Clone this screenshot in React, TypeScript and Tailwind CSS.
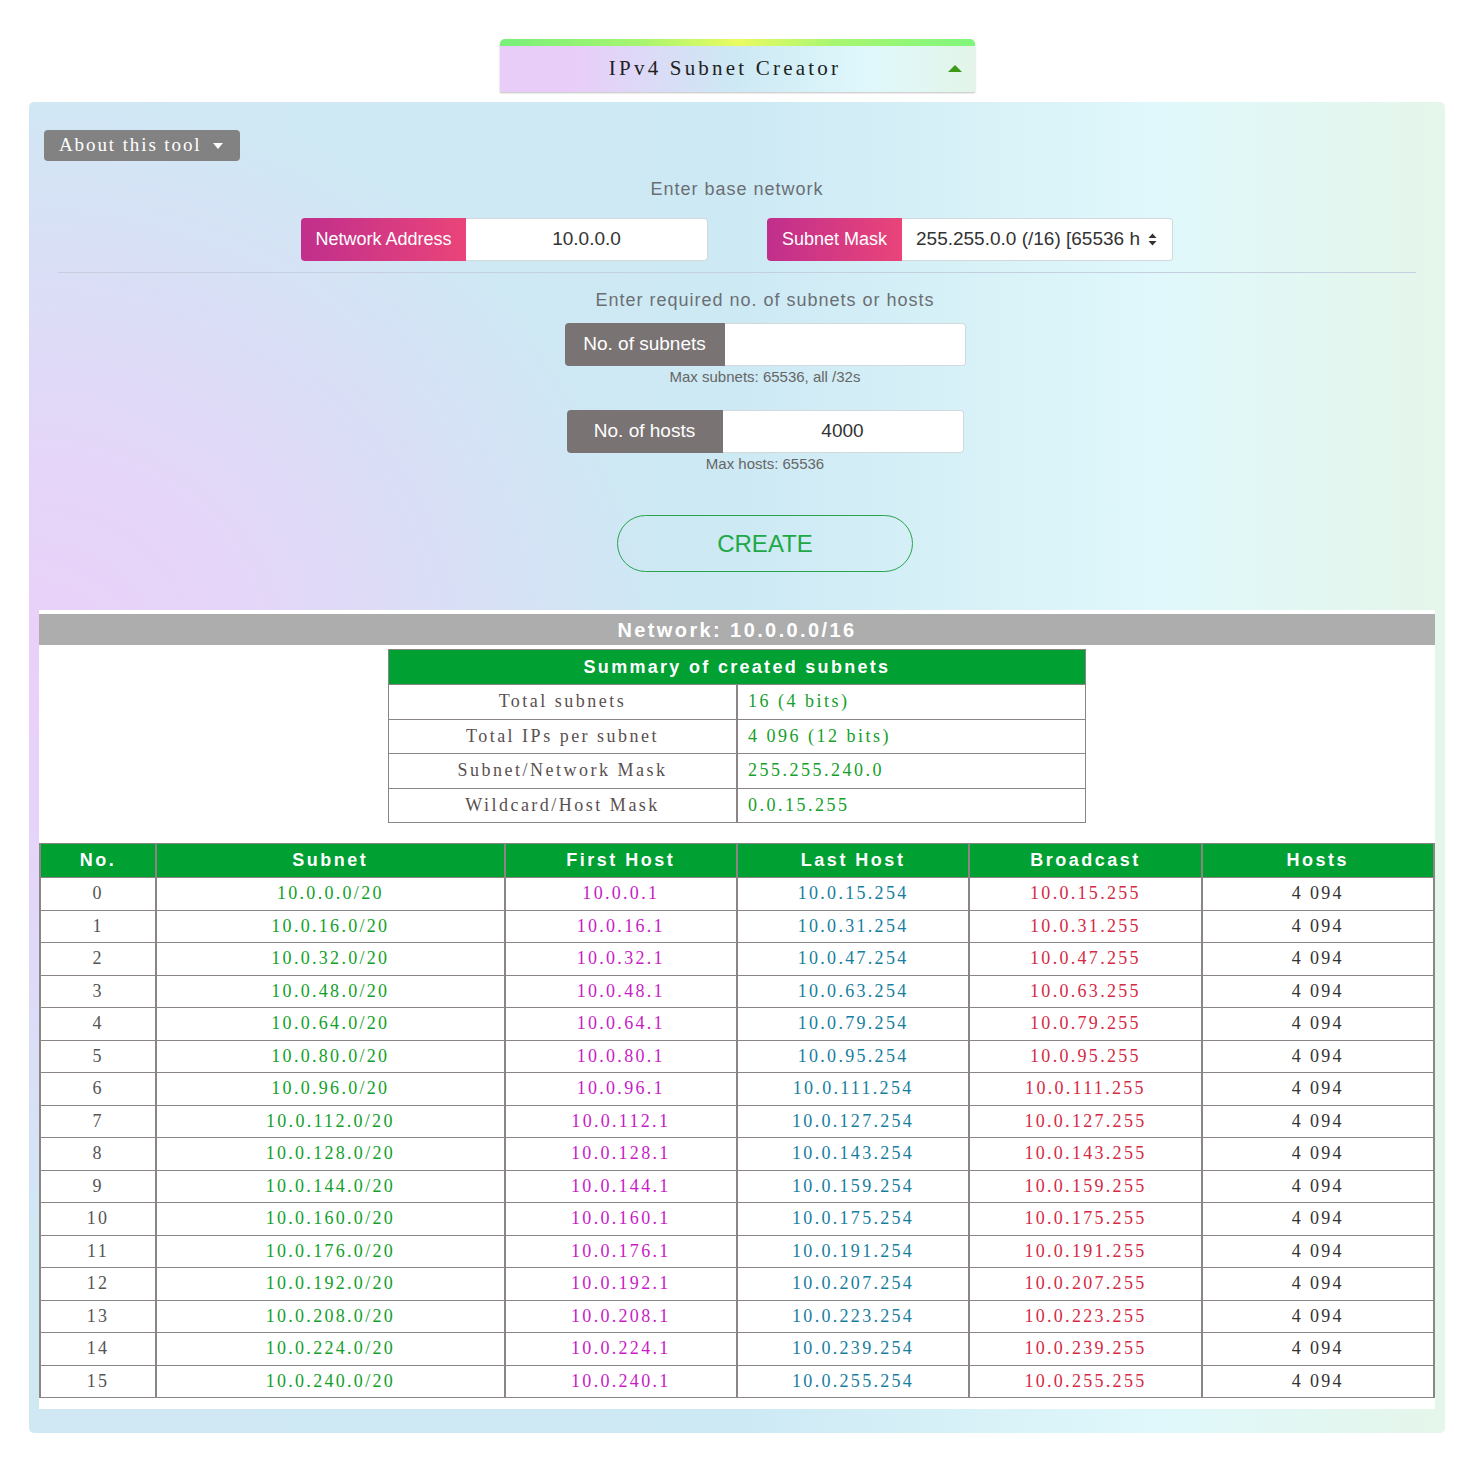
import React from 'react';

const serif = "font-['Liberation_Serif','Times_New_Roman',serif]";
const sans = "font-['Liberation_Sans',Arial,sans-serif]";

const rows = Array.from({ length: 16 }, (_, i) => ({
	no: i,
	subnet: `10.0.${i * 16}.0/20`,
	first: `10.0.${i * 16}.1`,
	last: `10.0.${i * 16 + 15}.254`,
	broadcast: `10.0.${i * 16 + 15}.255`,
	hosts: '4 094',
}));

const summary = [
	['Total subnets', '16 (4 bits)'],
	['Total IPs per subnet', '4 096 (12 bits)'],
	['Subnet/Network Mask', '255.255.240.0'],
	['Wildcard/Host Mask', '0.0.15.255'],
];

function SelectCaret() {
	return (
		<svg width="9" height="13" viewBox="0 0 9 13" className="shrink-0">
			<path d="M4.5 0.5 L8.5 5 L0.5 5 Z" fill="#333" />
			<path d="M0.5 8 L8.5 8 L4.5 12.5 Z" fill="#333" />
		</svg>
	);
}

function HeaderTab() {
	return (
		<div className="mx-auto w-[475px] overflow-hidden rounded-t-[5px] shadow-[0_1px_2px_rgba(0,0,0,0.25)]">
			<div className="h-[7px] bg-[linear-gradient(to_right,#78ef7a,#a8f56e_30%,#eafb62_50%,#a9f670_70%,#7ef77c)]" />
			<div className="relative flex h-[46px] items-center justify-center bg-[linear-gradient(to_right,#e9cdf9_15%,#cde9f4_50%,#e0f8fc_78%,#e3f5e8)] pr-[25px]">
				<span className={`${serif} text-[21px] tracking-[3.2px] text-[#222]`}>
					IPv4 Subnet Creator
				</span>
				<span className="absolute right-[13px] top-[19px] h-0 w-0 border-x-[7.5px] border-b-[7px] border-x-transparent border-b-[#3d9a16]" />
			</div>
		</div>
	);
}

function InputGroup({
	label,
	labelW,
	inputW,
	labelClass,
	value,
	labelText,
}: {
	label: string;
	labelW: string;
	inputW: string;
	labelClass: string;
	value: string;
	labelText: string;
}) {
	return (
		<div className="flex h-[43px]">
			<div
				className={`flex items-center justify-center rounded-l-[4px] ${labelW} ${labelClass} ${sans} ${labelText} text-white`}
			>
				{label}
			</div>
			<div
				className={`flex items-center justify-center rounded-r-[4px] border border-l-0 border-[#d2d8de] bg-white ${inputW} ${sans} text-[19px] text-[#333]`}
			>
				{value}
			</div>
		</div>
	);
}

export default function App() {
	const pink = 'bg-[linear-gradient(to_right,#c02f8c,#ea4479)]';
	const gray = 'bg-[#7a7373]';
	const cell = 'border-x-2 border-y border-[#8b8585]';
	const th = `${cell} bg-[#00a033] ${sans} text-[18px] font-bold tracking-[2.5px] text-white`;

	return (
		<div className="min-h-screen bg-white pt-[39px]">
			<HeaderTab />

			<div className="ml-[29px] mt-[10px] w-[1416px] rounded-[5px] bg-[radial-gradient(ellipse_640px_580px_at_0px_560px,rgba(234,208,249,1)_0%,rgba(234,208,249,0.78)_35%,rgba(234,208,249,0)_100%),linear-gradient(to_right,#d0e8f4_0%,#cde9f4_50%,#e0f8fb_80%,#e5f6ea_100%)] px-[10px] pb-[24px]">
				<div className="px-[5px] pt-[28px]">
					<button
						className={`flex h-[31px] w-[196px] items-center gap-[11px] rounded-[4px] bg-[#828282] pl-[15px] ${serif} text-[19px] tracking-[1.9px] text-white`}
					>
						About this tool
						<span className="h-0 w-0 border-x-[5.5px] border-t-[6px] border-x-transparent border-t-white" />
					</button>
				</div>

				<div className="px-[19px]">
					<p className={`mt-[18px] text-center ${sans} text-[18px] leading-[20px] tracking-[1px] text-[#6b6f74]`}>
						Enter base network
					</p>
					<div className="mt-[19px] flex justify-center gap-[59px]">
						<InputGroup
							label="Network Address"
							labelW="w-[165px]"
							inputW="w-[242px]"
							labelClass={pink}
							labelText="text-[18px]"
							value="10.0.0.0"
						/>
						<div className="flex h-[43px]">
							<div
								className={`flex w-[135px] items-center justify-center rounded-l-[4px] ${pink} ${sans} text-[18px] text-white`}
							>
								Subnet Mask
							</div>
							<div
								className={`flex w-[271px] items-center justify-between rounded-r-[4px] border border-l-0 border-[#d2d8de] bg-white pl-[14px] pr-[15px] ${sans} text-[19px] text-[#333]`}
							>
								<span className="overflow-hidden whitespace-nowrap">255.255.0.0 (/16) [65536 h</span>
								<SelectCaret />
							</div>
						</div>
					</div>
					<div className="mt-[11px] h-px bg-[#c6cfdf]" />

					<div className="flex flex-col items-center pl-[56px]">
						<p className={`mt-[17px] ${sans} text-[18px] leading-[20px] tracking-[1px] text-[#6b6f74]`}>
							Enter required no. of subnets or hosts
						</p>
						<div className="mt-[13px]">
							<InputGroup
								label="No. of subnets"
								labelW="w-[160px]"
								inputW="w-[241px]"
								labelClass={gray}
								labelText="text-[19px]"
								value=""
							/>
						</div>
						<p className={`mt-[2px] ${sans} text-[15px] leading-[17px] text-[#666]`}>
							Max subnets: 65536, all /32s
						</p>
						<div className="mt-[25px]">
							<InputGroup
								label="No. of hosts"
								labelW="w-[156px]"
								inputW="w-[241px]"
								labelClass={gray}
								labelText="text-[19px]"
								value="4000"
							/>
						</div>
						<p className={`mt-[2px] ${sans} text-[15px] leading-[17px] text-[#666]`}>
							Max hosts: 65536
						</p>
						<button
							className={`mt-[43px] flex h-[57px] w-[296px] items-center justify-center rounded-full border border-[#2aa54c] ${sans} text-[24px] text-[#21a846]`}
						>
							CREATE
						</button>
					</div>
				</div>

				<div className="mt-[38px] bg-white pb-[11px] pt-[4px]">
					<div
						className={`flex h-[31px] items-center justify-center bg-[#adadad] ${sans} text-[20px] font-bold tracking-[2.4px] text-white`}
					>
						Network: 10.0.0.0/16
					</div>

					<table className="mx-auto mt-[4px] w-1/2 border-collapse">
						<thead>
							<tr className="h-[35px]">
								<th colSpan={2} className={`border border-[#8b8585] bg-[#00a033] ${sans} text-[18px] font-bold tracking-[2.3px] text-white`}>
									Summary of created subnets
								</th>
							</tr>
						</thead>
						<tbody>
							{summary.map(([k, v]) => (
								<tr key={k} className="h-[34.5px]">
									<td className={`w-1/2 border border-r-2 border-[#8b8585] text-center ${serif} text-[18px] tracking-[2.5px] text-[#5a5050]`}>
										{k}
									</td>
									<td className={`border border-[#8b8585] pl-[10px] ${serif} text-[18px] tracking-[2.5px] text-[#14a02a]`}>
										{v}
									</td>
								</tr>
							))}
						</tbody>
					</table>

					<table className="mt-[20px] w-full table-fixed border-collapse">
						<thead>
							<tr className="h-[34px]">
								<th className={`${th} w-[8.33%]`}>No.</th>
								<th className={`${th} w-[25%]`}>Subnet</th>
								<th className={th}>First Host</th>
								<th className={th}>Last Host</th>
								<th className={th}>Broadcast</th>
								<th className={th}>Hosts</th>
							</tr>
						</thead>
						<tbody className={`${serif} text-[18px] tracking-[2.3px]`}>
							{rows.map((r) => (
								<tr key={r.no} className="h-[32.5px] text-center">
									<td className={`${cell} text-[#555]`}>{r.no}</td>
									<td className={`${cell} text-[#12a02a]`}>{r.subnet}</td>
									<td className={`${cell} text-[#c71cc7]`}>{r.first}</td>
									<td className={`${cell} text-[#177e9e]`}>{r.last}</td>
									<td className={`${cell} text-[#d42a45]`}>{r.broadcast}</td>
									<td className={`${cell} text-[#333]`}>{r.hosts}</td>
								</tr>
							))}
						</tbody>
					</table>
				</div>
			</div>
		</div>
	);
}
